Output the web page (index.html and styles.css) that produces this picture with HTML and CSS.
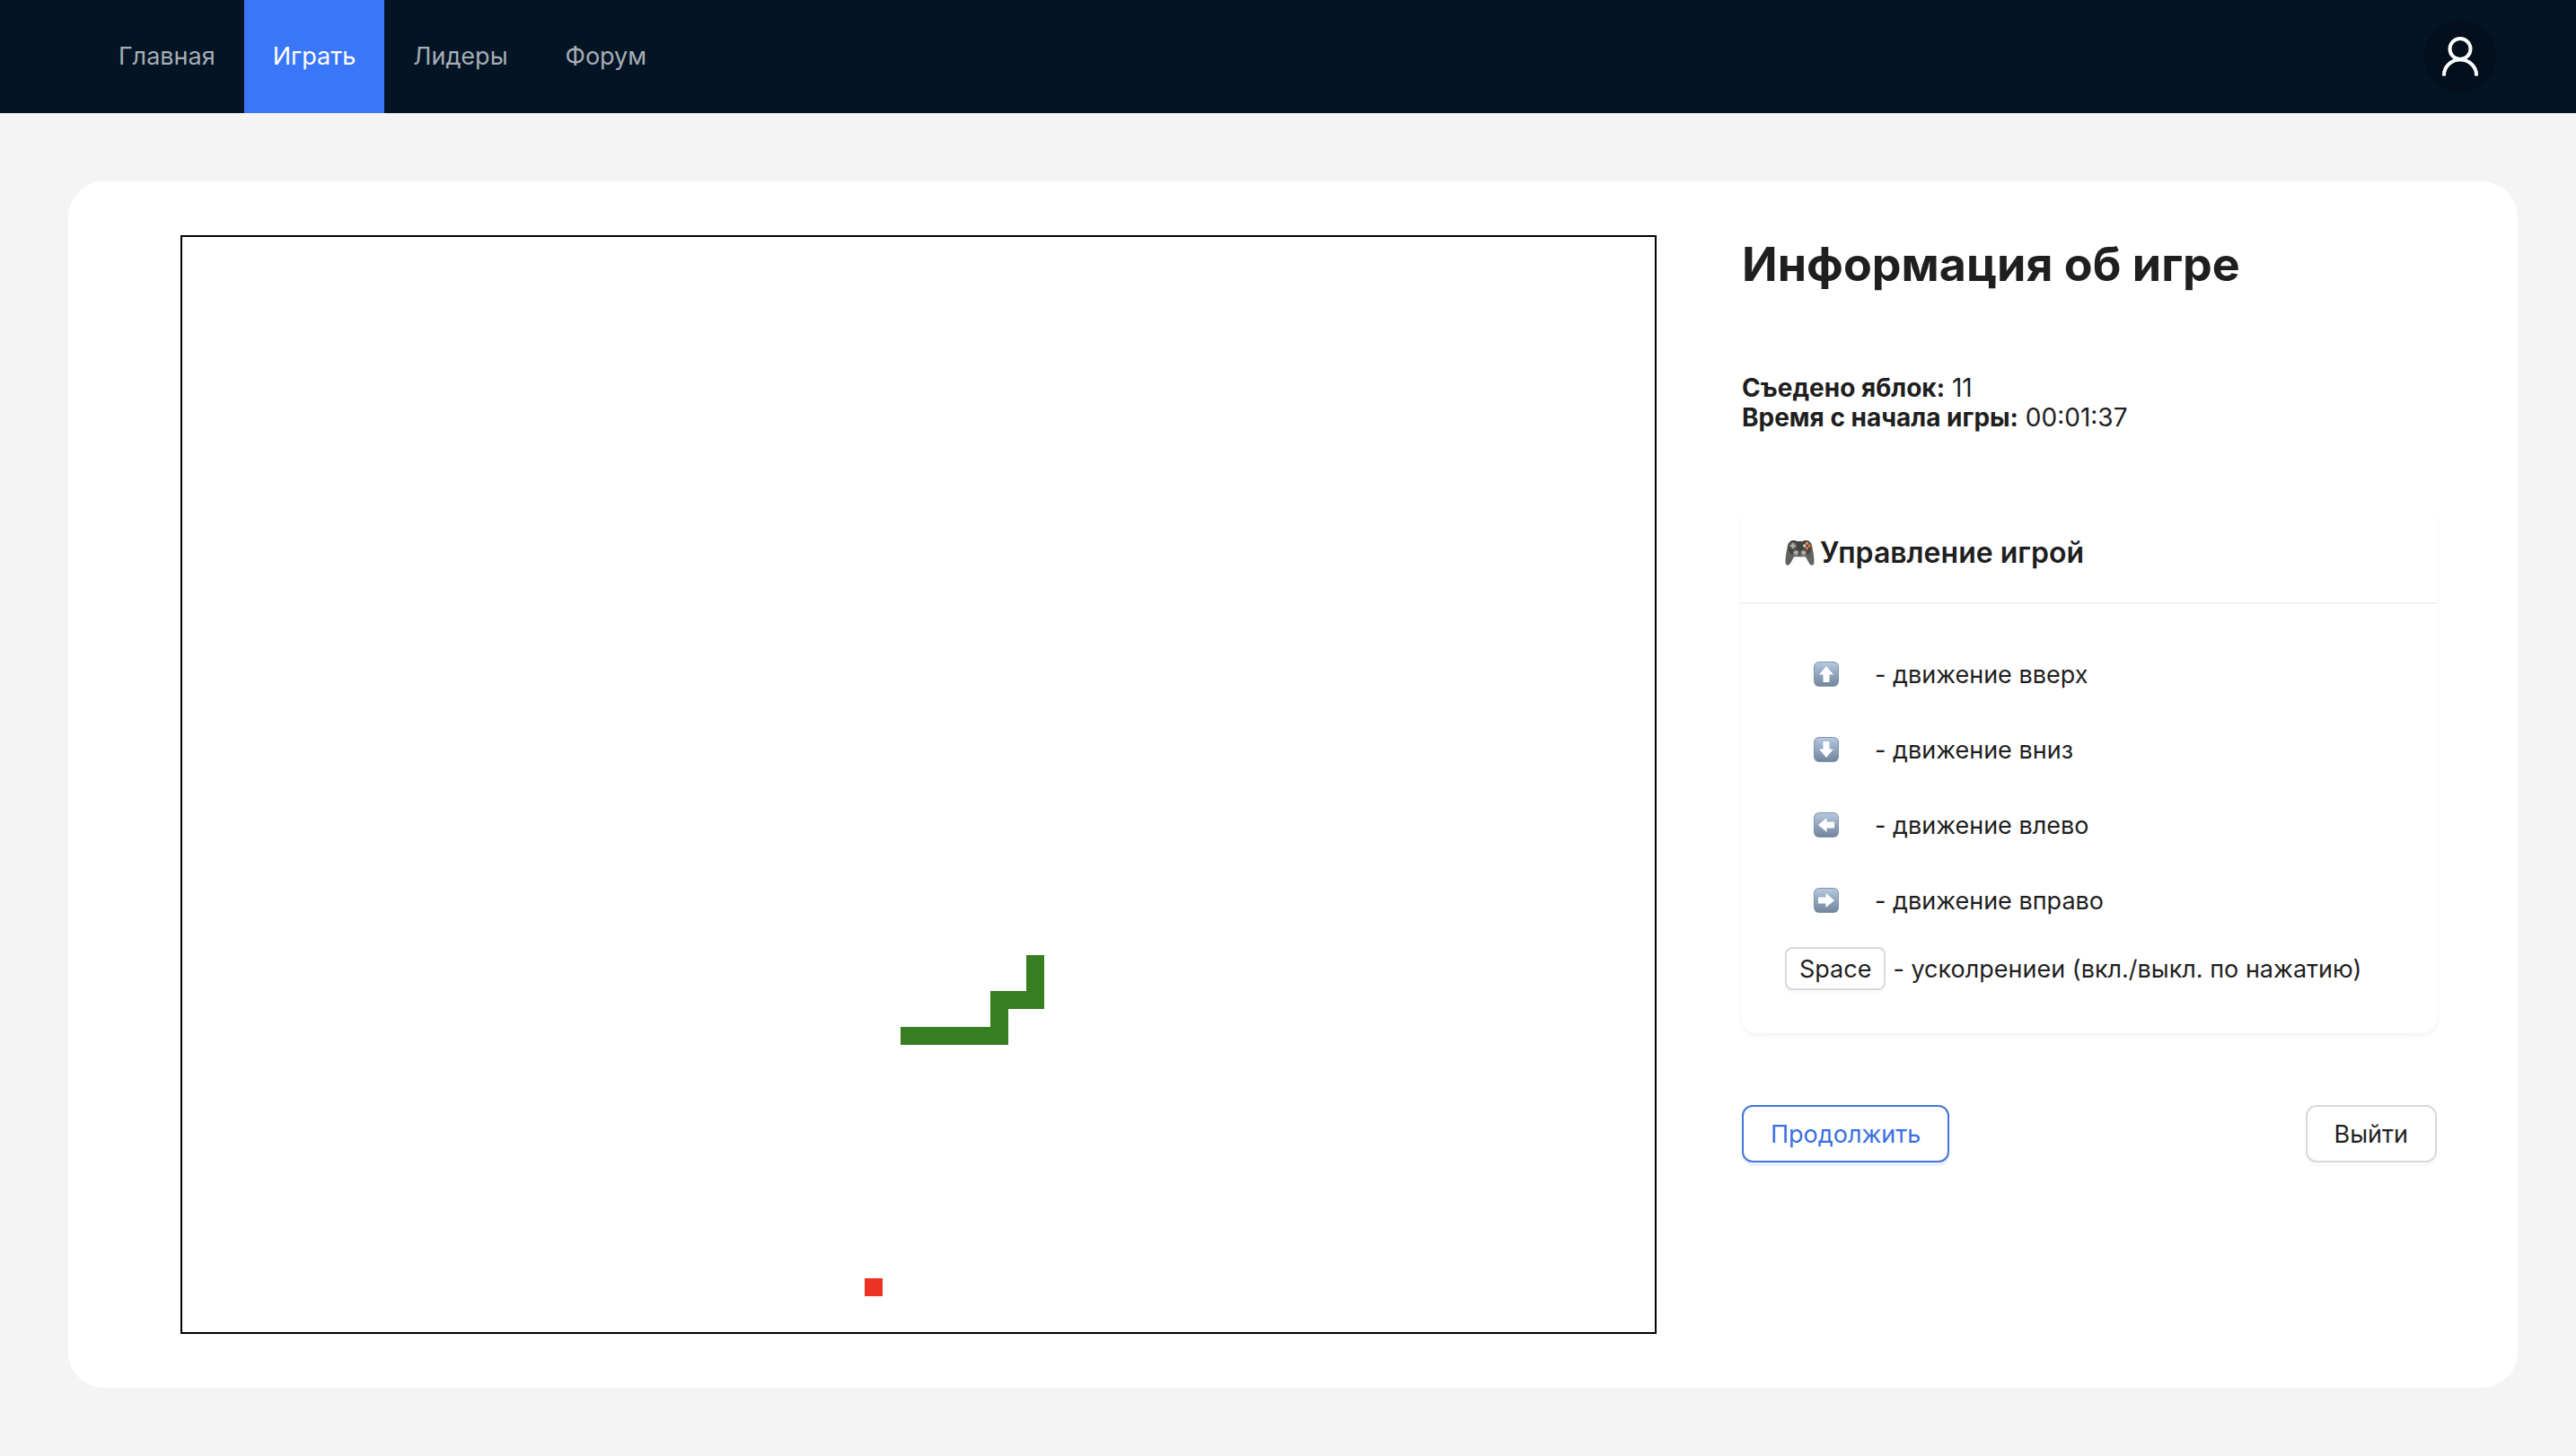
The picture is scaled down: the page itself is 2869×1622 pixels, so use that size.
FILE: index.html
```html
<!DOCTYPE html>
<html lang="ru">
<head>
<meta charset="utf-8">
<meta name="viewport" content="width=device-width, initial-scale=1">
<title>Змейка</title>
<link rel="stylesheet" href="styles.css">
</head>
<body>
<header class="header">
  <nav class="menu">
    <a class="menu-item" href="#home">Главная</a>
    <a class="menu-item menu-item-active" href="#play" aria-current="page">Играть</a>
    <a class="menu-item" href="#leaders">Лидеры</a>
    <a class="menu-item" href="#forum">Форум</a>
  </nav>
  <a class="avatar" href="#profile" aria-label="Профиль">
    <svg class="avatar-icon" viewBox="0 0 44 44" fill="none" stroke="currentColor" stroke-width="4" aria-hidden="true">
      <circle cx="22" cy="13.5" r="11.5"/>
      <path d="M4 43.5v-1a18 17 0 0 1 36 0v1"/>
    </svg>
  </a>
</header>
<main class="content">
  <section class="game">
    <svg class="board" viewBox="0 0 1640 1220" role="img" aria-label="Игровое поле">
      <path class="snake" d="M940 800h20v60h-40v40h-120v-20h100v-40h40z"/>
      <rect class="apple" x="760" y="1160" width="20" height="20"/>
    </svg>
    <aside class="info">
      <h1 class="info-title">Информация об игре</h1>
      <div class="stats">
        <div><strong>Съедено яблок:</strong> 11</div>
        <div><strong>Время с начала игры:</strong> 00:01:37</div>
      </div>
      <section class="card">
        <h2 class="card-head">
          <svg class="gamepad" viewBox="0 0 33 30" aria-hidden="true">
            <path d="M6 2.2Q7 1 10 1q2 0 3 1h7q1-1 3-1 3 0 4 1.200l2.500 2.500q3 12 3 20 0 4-2.500 4-2 0-3.500-3l-3.500-6.500h-13L6.500 25.700q-1.500 3-3.500 3-2.500 0-2.500-4 0-8 3-20z" fill="#62635f"/>
            <path d="M6 2.200Q7 1 10 1q2 0 3 1h7q1-1 3-1 3 0 4 1.200l2 2.300q1.200 6-1 9.500-1.500 3-6 3.500h-11q-4.500-.5-6-3.500-2.200-3.500-1-9.500z" fill="#444542"/>
            <circle cx="9" cy="7" r="4" fill="#656763"/>
            <path d="M8 4h2v2h2v2h-2v2H8V8H6V6h2z" fill="#aeb0ad"/>
            <circle cx="24.500" cy="4.300" r="1.700" fill="#e88a56"/>
            <circle cx="24.500" cy="9.700" r="1.700" fill="#e9793c"/>
            <circle cx="21.800" cy="7" r="1.700" fill="#ddd5ca"/>
            <circle cx="27.200" cy="7" r="1.700" fill="#ee7835"/>
            <circle cx="12.300" cy="15" r="3.200" fill="#858884"/>
            <circle cx="20.700" cy="15" r="3.200" fill="#858884"/>
            <circle cx="12.300" cy="14.600" r="1.700" fill="#b9bcb8"/>
            <circle cx="20.700" cy="14.600" r="1.700" fill="#b9bcb8"/>
          </svg>
          Управление игрой
        </h2>
        <div class="card-body">
          <svg class="symbols" aria-hidden="true">
            <defs>
              <linearGradient id="key-fill" x1="0" y1="0" x2="0" y2="1">
                <stop offset="0" stop-color="#b5c8df"/>
                <stop offset=".5" stop-color="#91a5bf"/>
                <stop offset="1" stop-color="#74869e"/>
              </linearGradient>
              <symbol id="key" viewBox="0 0 28 28">
                <rect width="28" height="28" rx="6" fill="#8093ab"/>
                <rect x="1" y="1" width="26" height="26" rx="5" fill="url(#key-fill)"/>
              </symbol>
            </defs>
          </svg>
          <div class="control">
            <button class="key-button" type="button" aria-label="Вверх"><svg class="key-icon" viewBox="0 0 28 28"><use href="#key"/><path d="M14 5l8 9.500h-4.500V23h-7v-8.500H6z" fill="#fff"/></svg></button>
            <span>- движение вверх</span>
          </div>
          <div class="control">
            <button class="key-button" type="button" aria-label="Вниз"><svg class="key-icon" viewBox="0 0 28 28"><use href="#key"/><path d="M14 23l8-9.500h-4.500V5h-7v8.500H6z" fill="#fff"/></svg></button>
            <span>- движение вниз</span>
          </div>
          <div class="control">
            <button class="key-button" type="button" aria-label="Влево"><svg class="key-icon" viewBox="0 0 28 28"><use href="#key"/><path d="M5 14l9.500-8v4.500H23v7h-8.500V22z" fill="#fff"/></svg></button>
            <span>- движение влево</span>
          </div>
          <div class="control">
            <button class="key-button" type="button" aria-label="Вправо"><svg class="key-icon" viewBox="0 0 28 28"><use href="#key"/><path d="M23 14l-9.500-8v4.500H5v7h8.500V22z" fill="#fff"/></svg></button>
            <span>- движение вправо</span>
          </div>
          <div class="control control-space">
            <button class="button button-small" type="button">Space</button>
            <span>- усколрениеи (вкл./выкл. по нажатию)</span>
          </div>
        </div>
      </section>
      <div class="actions">
        <button class="button button-primary" type="button">Продолжить</button>
        <button class="button" type="button">Выйти</button>
      </div>
    </aside>
  </section>
</main>
</body>
</html>
```
FILE: styles.css
```css
* {
  box-sizing: border-box;
}

body {
  margin: 0;
  background: #f4f4f4;
  color: #1f1f1f;
  font-family: Inter, "Liberation Sans", sans-serif;
  font-size: 27px;
  line-height: 33px;
}

.header {
  display: flex;
  align-items: center;
  justify-content: space-between;
  padding: 0 89px 0 100px;
  background: #031425;
}

.menu {
  display: flex;
}

.menu-item {
  padding: 0 32px;
  color: #a6adb4;
  line-height: 126px;
  text-decoration: none;
}

.menu-item-active {
  background: #3a76f8;
  color: #fff;
}

.avatar {
  display: flex;
  align-items: center;
  justify-content: center;
  width: 80px;
  height: 80px;
  border-radius: 50%;
  background: #030f1c;
  color: #fff;
}

.avatar-icon {
  width: 44px;
  height: 44px;
}

.content {
  padding: 76px 65px 76px 76px;
}

.game {
  display: grid;
  grid-template-columns: minmax(0, 1fr) 774px;
  column-gap: 95px;
  align-items: start;
  padding: 60px 90px 60px 125px;
  border-radius: 40px;
  background: #fff;
}

.board {
  display: block;
  width: 100%;
  border: 2px solid #000;
}

.snake {
  fill: #377e22;
}

.apple {
  fill: #ea3323;
}

.info-title {
  margin: 0 0 88px;
  font-size: 52px;
  font-weight: 700;
  line-height: 66px;
}

.stats {
  margin-bottom: 79px;
  font-size: 28px;
}

.card {
  border-radius: 16px;
  background: #fff;
  box-shadow: 0 2px 4px rgba(0, 0, 0, .03), 0 2px 12px -2px rgba(0, 0, 0, .02), 0 4px 8px rgba(0, 0, 0, .02);
}

.card-head {
  display: flex;
  align-items: center;
  gap: 6px;
  margin: 0;
  padding: 0 48px;
  border-bottom: 2px solid #f0f0f0;
  font-size: 32px;
  font-weight: 600;
  line-height: 110px;
}

.gamepad {
  width: 33px;
  height: 30px;
}

.card-body {
  display: flex;
  flex-direction: column;
  gap: 20px;
  padding: 46px 48px 48px;
}

.symbols {
  position: absolute;
  width: 0;
  height: 0;
}

.control {
  display: flex;
  align-items: center;
  gap: 8px;
}

.key-button {
  display: flex;
  align-items: center;
  justify-content: center;
  width: 92px;
  height: 64px;
  padding: 0;
  border: 0;
  background: none;
}

.key-icon {
  width: 28px;
  height: 28px;
}

.actions {
  display: flex;
  justify-content: space-between;
  margin-top: 80px;
}

.button {
  height: 64px;
  padding: 0 30px;
  border: 2px solid #d9d9d9;
  border-radius: 12px;
  background: #fff;
  box-shadow: 0 4px 0 rgba(0, 0, 0, .02);
  color: #1f1f1f;
  font: inherit;
}

.button-primary {
  border-color: #4475d8;
  box-shadow: 0 4px 0 #e8f3fd;
  color: #3a70e4;
}

.button-small {
  height: 48px;
  padding: 0 14px;
  border-radius: 8px;
}
```
